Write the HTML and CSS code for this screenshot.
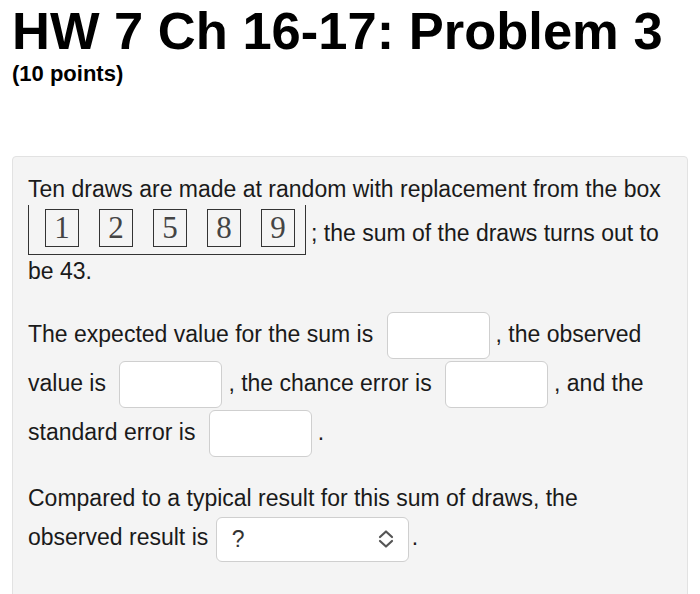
FILE: index.html
```html
<!DOCTYPE html>
<html>
<head>
<meta charset="utf-8">
<title>HW 7 Ch 16-17: Problem 3</title>
<link rel="stylesheet" href="styles.css">
</head>
<body>
<h1 class="title">HW 7 Ch 16-17: Problem 3</h1>
<div class="points">(10 points)</div>
<div class="panel">
  <p class="para">Ten draws are made at random with replacement from the box <span class="box"><span class="ticket">1</span><span class="ticket">2</span><span class="ticket">5</span><span class="ticket">8</span><span class="ticket">9</span></span>; the sum of the draws turns out to be 43.</p>
  <p class="para para-inputs">The expected value for the sum is <span class="answer"></span>, the observed value is <span class="answer"></span>, the chance error is <span class="answer"></span>, and the standard error is <span class="answer"></span>.</p>
  <p class="para para-select">Compared to a typical result for this sum of draws, the observed result is <span class="select"><span class="select-text">?</span><svg class="chev" width="18" height="20" viewBox="0 0 18 20"><path d="M3 8 L9 2.5 L15 8 M3 12 L9 17.5 L15 12" fill="none" stroke="#555" stroke-width="2.2" stroke-linecap="round" stroke-linejoin="round"/></svg></span>.</p>
</div>
</body>
</html>
```
FILE: styles.css
```css
html, body {
  margin: 0;
  padding: 0;
  background: #fff;
}
body {
  padding: 0 12px;
  font-family: "Liberation Sans", Arial, sans-serif;
  color: #111;
}
.title {
  margin: 1px 0 0;
  font-size: 52.5px;
  line-height: 60px;
  font-weight: bold;
  color: #000;
}
.points {
  font-size: 22px;
  font-weight: bold;
  line-height: 25px;
  color: #000;
}
.panel {
  margin-top: 70px;
  background: #f4f4f4;
  border: 1px solid #e2e2e2;
  border-radius: 4px;
  padding: 19px 15px 60px;
  font-size: 23px;
  color: #1a1a1a;
}
.para {
  margin: 0 0 27px;
  line-height: 26px;
}
.box {
  display: inline-flex;
  align-items: flex-start;
  gap: 20px;
  box-sizing: border-box;
  height: 50px;
  padding: 4px 10px 0 16px;
  border: 1.5px solid #333;
  border-top: none;
  margin: 3px 5px 3px 0;
  vertical-align: 3px;
}
.ticket {
  display: block;
  box-sizing: border-box;
  width: 34px;
  height: 38px;
  border: 1.5px solid #333;
  font-family: "Liberation Serif", "Times New Roman", serif;
  font-size: 31px;
  line-height: 35px;
  text-align: center;
  color: #444;
}
.answer {
  display: inline-block;
  box-sizing: border-box;
  width: 103px;
  height: 47px;
  margin: 1px 6px 1px 7px;
  background: #fff;
  border: 1px solid #cfcfcf;
  border-radius: 6px;
  vertical-align: middle;
}
.select {
  display: inline-flex;
  align-items: center;
  justify-content: space-between;
  box-sizing: border-box;
  width: 193px;
  height: 45px;
  margin: 5.5px 3px 5.5px 1px;
  padding: 0 13px 0 15px;
  background: #fff;
  border: 1px solid #cfcfcf;
  border-radius: 6px;
  vertical-align: middle;
}
.select-text {
  color: #333;
  font-size: 23px;
}
.chev {
  display: block;
}
```
